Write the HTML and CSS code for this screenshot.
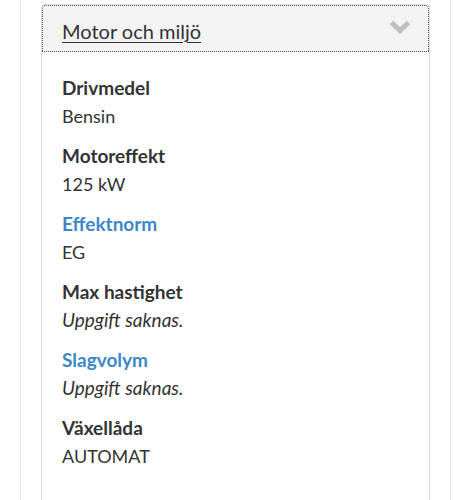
FILE: index.html
```html
<!DOCTYPE html>
<html lang="sv">
<head>
<meta charset="utf-8">
<link rel="stylesheet" href="styles.css">
</head>
<body>
<div class="page">
  <section class="panel">
    <button class="panel-head">
      <span class="panel-title">Motor och miljö</span>
      <svg class="chevron" width="22" height="14" viewBox="0 0 22 14"><path d="M2.5 2.5 L11 10.5 L19.5 2.5" fill="none" stroke="#bdbdbd" stroke-width="5" stroke-linejoin="miter"/></svg>
    </button>
    <dl class="facts">
      <div class="fact"><dt>Drivmedel</dt><dd>Bensin</dd></div>
      <div class="fact"><dt>Motoreffekt</dt><dd>125 kW</dd></div>
      <div class="fact"><dt class="link">Effektnorm</dt><dd>EG</dd></div>
      <div class="fact"><dt>Max hastighet</dt><dd class="missing">Uppgift saknas.</dd></div>
      <div class="fact"><dt class="link">Slagvolym</dt><dd class="missing">Uppgift saknas.</dd></div>
      <div class="fact"><dt>Växellåda</dt><dd>AUTOMAT</dd></div>
    </dl>
  </section>
</div>
</body>
</html>
```

FILE: styles.css
```css
html, body {
  margin: 0;
  padding: 0;
  background: #fff;
}
body {
  font-family: "Lato", "Noto Sans", sans-serif;
  color: #333;
}
.page {
  margin: 0 20px;
  border-left: 1px solid #e6e6e6;
  border-right: 1px solid #e6e6e6;
  padding: 4px 20px 0 20px;
  min-height: 500px;
  box-sizing: border-box;
}
.panel {
  border: 1px solid #dcdcdc;
  border-bottom: none;
  border-radius: 4px 4px 0 0;
  min-height: 496px;
}
.panel-head {
  display: flex;
  align-items: center;
  justify-content: space-between;
  width: 100%;
  height: 47px;
  margin: 0;
  padding: 0 18px 0 20px;
  background: #f3f3f3;
  border: none;
  border-radius: 4px 4px 0 0;
  outline: 1px dotted #555;
  outline-offset: -1px;
  box-sizing: border-box;
  font: inherit;
  cursor: pointer;
}
.panel-title {
  font-family: "Lato", sans-serif;
  font-size: 20px;
  color: #333;
  text-decoration: underline;
  text-decoration-thickness: 1px;
  text-underline-offset: 3px;
  margin-top: 5px;
}
.chevron {
  display: block;
  margin-top: -4px;
}
.facts {
  margin: 0;
  padding: 22px 20px 0 20px;
}
.fact {
  margin-bottom: 12px;
}
.fact dt {
  font-weight: 700;
  font-size: 19px;
  line-height: 28px;
  color: #333;
}
.fact dt.link {
  color: #3d87c9;
}
.fact dd {
  margin: 0;
  font-size: 18px;
  line-height: 28px;
  color: #333;
}
.fact dd.missing {
  font-style: italic;
  font-size: 19px;
}
```
